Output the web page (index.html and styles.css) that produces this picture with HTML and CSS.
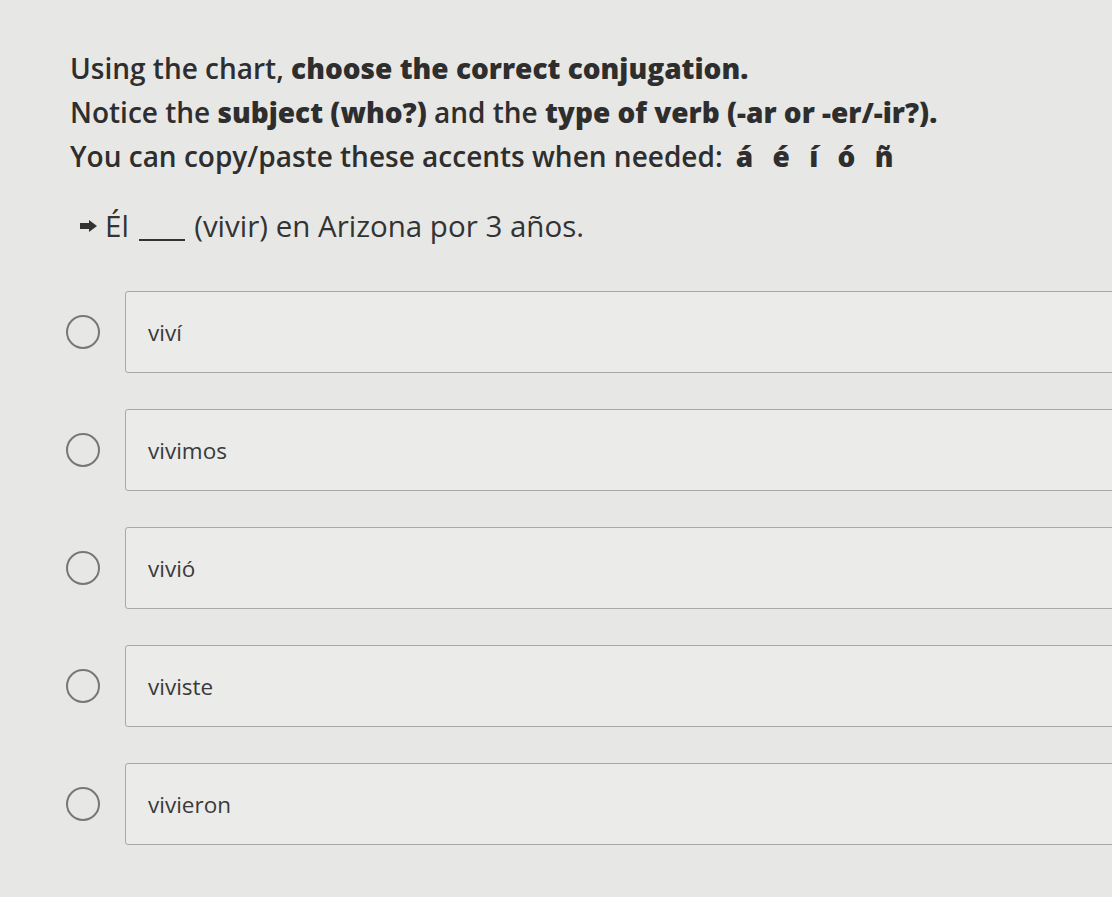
FILE: index.html
```html
<!DOCTYPE html>
<html>
<head>
<meta charset="utf-8">
<link rel="stylesheet" href="styles.css">
</head>
<body>
<div class="page">
  <div class="instructions">
    <p class="line">Using the chart, <b>choose the correct conjugation.</b></p>
    <p class="line">Notice the <b>subject (who?)</b> and the <b>type of verb (-ar or -er/-ir?).</b></p>
    <p class="line">You can copy/paste these accents when needed: <b class="accents">á é í ó ñ</b></p>
  </div>
  <div class="question">
    <svg class="arrow" width="17" height="12" viewBox="0 0 17 12"><path d="M0 3H9V0L17 6L9 12V9H0Z" fill="#333"/></svg>
    <span>Él <span class="blank"></span> (vivir) en Arizona por 3 años.</span>
  </div>
  <div class="options">
    <div class="option"><span class="radio"></span><div class="box">viví</div></div>
    <div class="option"><span class="radio"></span><div class="box">vivimos</div></div>
    <div class="option"><span class="radio"></span><div class="box">vivió</div></div>
    <div class="option"><span class="radio"></span><div class="box">viviste</div></div>
    <div class="option"><span class="radio"></span><div class="box">vivieron</div></div>
  </div>
</div>
</body>
</html>
```
FILE: styles.css
```css
html, body {
  margin: 0;
  padding: 0;
  background: #e7e7e5;
  overflow: hidden;
}
.page {
  width: 1112px;
  height: 897px;
  padding: 46px 0 0 70px;
  box-sizing: border-box;
  font-family: "Open Sans", "Noto Sans", sans-serif;
  color: #2e2e2e;
  overflow: hidden;
}
.instructions .line {
  margin: 0;
  font-size: 28px;
  line-height: 44px;
  font-weight: 600;
}
.instructions b {
  font-weight: 800;
}
.accents {
  word-spacing: 12px;
  margin-left: 6px;
}
.question {
  display: flex;
  align-items: center;
  gap: 8px;
  margin-top: 30px;
  margin-left: 10px;
  font-size: 29.5px;
  line-height: 36px;
  font-weight: 500;
  color: #333;
}
.blank {
  display: inline-block;
  width: 46px;
  border-bottom: 2px solid #333;
  vertical-align: -4px;
  margin: 0 2px;
}
.options {
  margin-top: 47px;
  display: flex;
  flex-direction: column;
  gap: 36px;
}
.option {
  display: flex;
  align-items: center;
  margin-left: -4px;
}
.radio {
  width: 30px;
  height: 30px;
  border: 2px solid #777;
  border-radius: 50%;
  flex: none;
  margin-right: 25px;
}
.box {
  flex: none;
  width: 1100px;
  height: 82px;
  box-sizing: border-box;
  border: 1.5px solid #a8a8a6;
  border-radius: 3px;
  background: #ebebea;
  display: flex;
  align-items: center;
  padding-left: 22px;
  font-size: 22.5px;
  color: #3a3a3a;
}
```
